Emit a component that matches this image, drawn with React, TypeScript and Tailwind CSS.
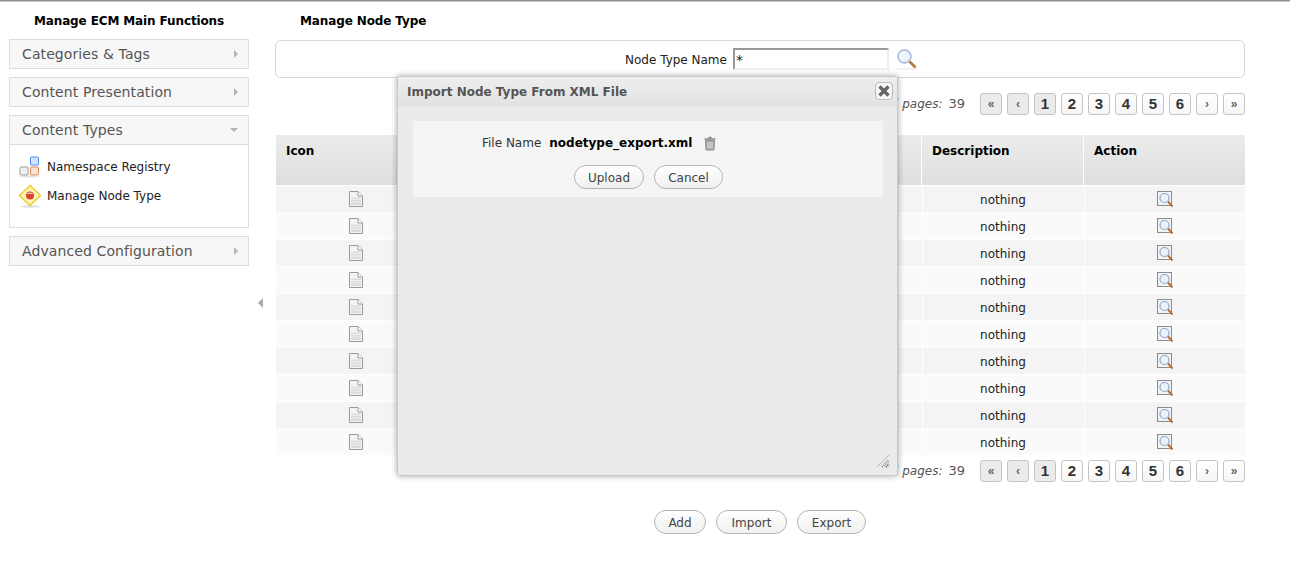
import React from "react";

const FONT = "font-['DejaVu_Sans',Verdana,sans-serif]";

const PAGES = ["«", "‹", "1", "2", "3", "4", "5", "6", "›", "»"];

const FileIcon = () => (
  <svg width="16" height="18" viewBox="0 0 16 18" className="block">
    <path d="M1.5 1.5h8.5l4.5 4.5v10.5h-13z" fill="#f4f4f4" stroke="#9a9a9a" />
    <path d="M10 1.5v4.5h4.5" fill="#fff" stroke="#9a9a9a" />
    <path d="M3 7.5h10v7.5H3z" fill="#dcdcdc" />
    <path d="M3 9.5h10M3 12h10" stroke="#efefef" />
  </svg>
);

const ViewIcon = () => (
  <svg width="17" height="17" viewBox="0 0 17 17" className="block">
    <rect x="0.5" y="0.5" width="14" height="14" fill="#f3f3f3" stroke="#8c8c8c" />
    <circle cx="7.5" cy="7" r="4.5" fill="#e9f1fa" stroke="#8fa8c8" strokeWidth="1.2" />
    <path d="M11 10.5l4.5 5" stroke="#b5703a" strokeWidth="2" />
  </svg>
);

const SearchIcon = () => (
  <svg width="22" height="22" viewBox="0 0 22 22" className="block">
    <path d="M1 21h20" stroke="#e4e4e4" />
    <circle cx="8.5" cy="8.5" r="6.5" fill="#eef4fb" stroke="#9db4d4" strokeWidth="1.4" />
    <path d="M4 7a5 4 0 0 1 5-3" stroke="#fff" strokeWidth="1.5" fill="none" />
    <path d="M13.5 13.5l6 6" stroke="#b8793f" strokeWidth="2.6" />
  </svg>
);

const RegistryIcon = () => (
  <svg width="22" height="22" viewBox="0 0 22 22" className="block">
    <ellipse cx="11" cy="20.5" rx="10" ry="1.2" fill="#e6e6e6" />
    <rect x="12.5" y="1" width="8" height="8" rx="1" fill="#cfe2ff" stroke="#4d8ff0" />
    <rect x="2" y="11" width="8" height="8" rx="1" fill="#f0f0f0" stroke="#9c9c9c" />
    <rect x="12.5" y="11" width="8" height="8" rx="1" fill="#fbe3d2" stroke="#d98a55" />
  </svg>
);

const NodeTypeIcon = () => (
  <svg width="24" height="24" viewBox="0 0 24 24" className="block">
    <ellipse cx="12" cy="22.5" rx="10" ry="1.2" fill="#dedede" />
    <path d="M12 1.5l10.5 10-10.5 10-10.5-10z" fill="#fff4b8" stroke="#f0cc30" strokeWidth="1.5" />
    <circle cx="12" cy="11.5" r="4" fill="#d9462c" />
    <path d="M8.6 10a4 3 0 0 1 6.8 0z" fill="#e8c8b8" />
  </svg>
);

const TrashIcon = () => (
  <svg width="12" height="15" viewBox="0 0 12 15" className="block">
    <path d="M4.5 1.5h3M0.5 3h11" stroke="#8a8a8a" strokeWidth="1.4" />
    <path d="M1.5 4.5h9l-.6 9.5H2.1z" fill="#a8a8a8" stroke="#8a8a8a" />
    <path d="M4 6v6.5M6 6v6.5M8 6v6.5" stroke="#dedede" />
  </svg>
);

const PillButton = ({ label, width }: { label: string; width: string }) => (
  <button
    className={`${width} h-6 pt-px rounded-xl border border-[#b5b5b5] bg-gradient-to-b from-white to-[#f0f0f0] text-xs text-[#444] flex items-center justify-center`}
  >
    {label}
  </button>
);

const AccordionHead = ({ label, open }: { label: string; open?: boolean }) => (
  <div
    className={`bg-[#f7f7f7] flex items-center justify-between pl-3 pr-2.5 ${
      open ? "h-[29px] border-b border-[#dedede]" : "h-7"
    }`}
  >
    <span className="text-sm text-[#555] tracking-[0.1px]">{label}</span>
    {open ? (
      <span className="w-0 h-0 border-x-[4px] border-x-transparent border-t-[4px] border-t-[#b5b5b5]" />
    ) : (
      <span className="w-0 h-0 border-y-[4px] border-y-transparent border-l-[4px] border-l-[#b5b5b5]" />
    )}
  </div>
);

const Pager = () => (
  <div className="flex items-center justify-end h-[22px]">
    <span className="text-xs text-[#555] mr-[15px]">
      <i>Total pages:</i>
      <span className="ml-1.5 text-[13px]">39</span>
    </span>
    <div className="flex gap-[5px]">
      {PAGES.map((p, i) => {
        const off = i < 3;
        const num = i >= 2 && i <= 7;
        return (
          <div
            key={p}
            className={`w-[22px] h-[22px] rounded-[3px] border border-[#c4c4c4] flex items-center justify-center font-['Liberation_Sans',Arial,sans-serif] font-bold ${
              off ? "bg-[#ebebeb]" : "bg-gradient-to-b from-white to-[#f5f5f5]"
            } ${num ? "text-[15px] text-[#333]" : "text-xs text-[#666]"}`}
          >
            {p}
          </div>
        );
      })}
    </div>
  </div>
);

const Row = ({ odd }: { odd: boolean }) => (
  <div
    className={`grid grid-cols-[161px_160px_160px_161px_161px_1fr] gap-px h-[26px] mb-px ${
      odd ? "bg-[#f4f4f4]" : "bg-[#fafafa]"
    }`}
  >
    <div className="flex items-center justify-center pr-0.5">
      <FileIcon />
    </div>
    <div />
    <div />
    <div />
    <div className="flex items-center justify-center pt-px text-xs text-[#222] border-l border-white">nothing</div>
    <div className="flex items-center justify-center border-l border-white">
      <ViewIcon />
    </div>
  </div>
);

export default function App() {
  return (
    <div className={`relative h-[578px] w-[1290px] overflow-hidden bg-white ${FONT}`}>
      <div className="h-0.5 bg-[#8f8f8f] border-b border-[#c8c8c8]" />
      <div className="flex pl-[9px] pt-2.5">
        {/* left panel */}
        <div className="w-[240px] shrink-0">
          <h3 className="h-[27px] pt-px text-xs font-bold text-black text-center tracking-[-0.12px]">
            Manage ECM Main Functions
          </h3>
          <div className="flex flex-col gap-2">
            <div className="border border-[#dedede]">
              <AccordionHead label="Categories & Tags" />
            </div>
            <div className="border border-[#dedede]">
              <AccordionHead label="Content Presentation" />
            </div>
            <div className="border border-[#dedede]">
              <AccordionHead label="Content Types" open />
              <div className="h-[82px] pt-2.5 pl-2 flex flex-col gap-[5px] text-xs text-[#222]">
                <div className="flex items-center gap-[7px] h-6">
                  <RegistryIcon />
                  Namespace Registry
                </div>
                <div className="flex items-center gap-[5px] h-6">
                  <NodeTypeIcon />
                  Manage Node Type
                </div>
              </div>
            </div>
            <div className="border border-[#dedede]">
              <AccordionHead label="Advanced Configuration" />
            </div>
          </div>
        </div>

        {/* collapse handle */}
        <div className="w-[26px] shrink-0 pt-[286px] pl-[9px]">
          <div className="w-0 h-0 border-y-[5px] border-y-transparent border-r-[5px] border-r-[#aaa]" />
        </div>

        {/* main column */}
        <div className="w-[970px] shrink-0">
          <h3 className="h-7 pt-px pl-[25px] text-xs font-bold text-black tracking-[-0.12px]">Manage Node Type</h3>
          <div className="h-[38px] rounded-md border border-[#d8d8d8] flex items-center justify-center text-xs text-[#222] pr-px">
            <span className="ml-[25px] mr-1.5 pt-0.5">Node Type Name</span>
            <div className="w-[156px] h-[22px] border-2 border-t-[#999] border-l-[#999] border-r-[#eee] border-b-[#eee] text-sm leading-5 pl-px text-[#222]">
              *
            </div>
            <div className="ml-[7px] mr-px">
              <SearchIcon />
            </div>
          </div>
          <div className="mt-[15px]">
            <Pager />
          </div>
          <div className="mt-5 ml-px">
            <div className="grid grid-cols-[161px_160px_160px_161px_161px_1fr] gap-px h-[50px] mb-px text-xs font-bold text-black">
              {["Icon", "", "", "", "Description", "Action"].map((h, i) => (
                <div key={i} className="bg-gradient-to-b from-[#ececec] to-[#dedede] pl-2.5 pt-2">
                  {h}
                </div>
              ))}
            </div>
            {Array.from({ length: 10 }, (_, i) => (
              <Row key={i} odd={i % 2 === 0} />
            ))}
          </div>
          <div className="mt-[5px]">
            <Pager />
          </div>
          <div className="mt-7 flex justify-center gap-2.5">
            <PillButton label="Add" width="w-[52px]" />
            <PillButton label="Import" width="w-[71px]" />
            <PillButton label="Export" width="w-[69px]" />
          </div>
        </div>
      </div>

      {/* import dialog */}
      <div className="absolute left-[397px] top-[76px] w-[501px] h-[400px] bg-[#ebebeb] rounded-[3px] border border-[#c8c8c8] shadow-[0_0_6px_rgba(0,0,0,0.35)]">
        <div className="h-[30px] bg-gradient-to-b from-[#eeeeee] to-[#e2e2e2] flex items-center justify-between pl-[9px] pr-1">
          <span className="text-xs font-bold text-[#555]">Import Node Type From XML File</span>
          <div className="self-start mt-[5px] w-[18px] h-[18px] border border-[#bbb] rounded-sm bg-[#f6f6f6] flex items-center justify-center">
            <svg width="14" height="14" viewBox="0 0 14 14">
              <path d="M2.5 2.5l9 9M11.5 2.5l-9 9" stroke="#666" strokeWidth="3.4" />
            </svg>
          </div>
        </div>
        <div className="ml-[15px] mr-[14px] mt-[14px] h-[76px] bg-[#f5f5f5] pt-[13px]">
          <div className="flex items-center h-[18px] pl-[69px] text-xs">
            <span className="text-[#333]">File Name</span>
            <b className="ml-2 text-black">nodetype_export.xml</b>
            <span className="ml-3">
              <TrashIcon />
            </span>
          </div>
          <div className="mt-[13px] flex justify-center gap-2.5 pl-px">
            <PillButton label="Upload" width="w-[70px]" />
            <PillButton label="Cancel" width="w-[69px]" />
          </div>
        </div>
        <svg width="14" height="14" viewBox="0 0 14 14" className="absolute right-[7px] bottom-[7px]">
          <path d="M1 13L13 1" stroke="#bbb" />
          <path d="M6 13l7-7" stroke="#888" strokeDasharray="1 1" strokeWidth="2" />
          <path d="M10 13l3-3" stroke="#555" strokeDasharray="1 1" strokeWidth="2" />
        </svg>
      </div>
    </div>
  );
}
